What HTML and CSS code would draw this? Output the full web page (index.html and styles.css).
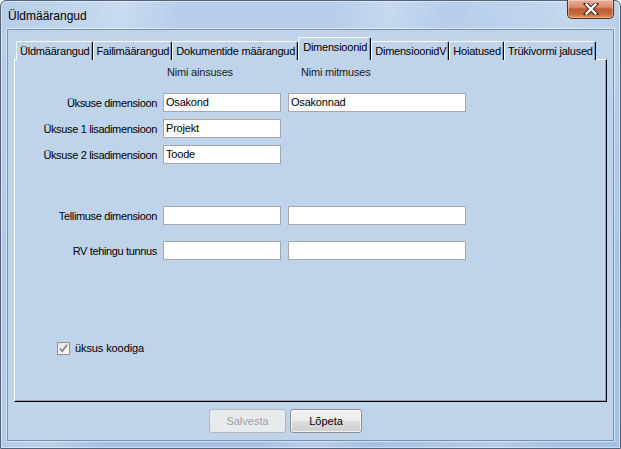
FILE: index.html
```html
<!DOCTYPE html>
<html lang="et">
<head>
<meta charset="utf-8">
<title>Üldmäärangud</title>
<link rel="stylesheet" href="styles.css">
</head>
<body>
<div class="window">
  <div class="titlebar">
    <span class="title">Üldmäärangud</span>
    <div class="close">
      <svg width="16" height="12" viewBox="0 0 16 12">
        <path d="M3 1 L13 11 M13 1 L3 11" stroke="#3a2018" stroke-width="4.2" stroke-linecap="square" fill="none"/>
        <path d="M3.5 1.5 L12.5 10.5 M12.5 1.5 L3.5 10.5" stroke="#ffffff" stroke-width="2.4" stroke-linecap="square" fill="none"/>
      </svg>
    </div>
  </div>
  <div class="client">
    <div class="tabs">
      <div class="tab">Üldmäärangud</div>
      <div class="tab">Failimäärangud</div>
      <div class="tab">Dokumentide määrangud</div>
      <div class="tab active">Dimensioonid</div>
      <div class="tab">DimensioonidV</div>
      <div class="tab">Hoiatused</div>
      <div class="tab">Trükivormi jalused</div>
    </div>
    <div class="panel">
      <div class="heads">
        <span class="head-one">Nimi ainsuses</span>
        <span class="head-two">Nimi mitmuses</span>
      </div>
      <div class="row row-first">
        <span class="lbl">Üksuse dimensioon</span>
        <div class="field f-one">Osakond</div>
        <div class="field f-two">Osakonnad</div>
      </div>
      <div class="row row-next">
        <span class="lbl">Üksuse 1 lisadimensioon</span>
        <div class="field f-one">Projekt</div>
      </div>
      <div class="row row-next">
        <span class="lbl">Üksuse 2 lisadimensioon</span>
        <div class="field f-one">Toode</div>
      </div>
      <div class="row row-order">
        <span class="lbl">Tellimuse dimensioon</span>
        <div class="field f-one"></div>
        <div class="field f-two"></div>
      </div>
      <div class="row row-rv">
        <span class="lbl">RV tehingu tunnus</span>
        <div class="field f-one"></div>
        <div class="field f-two"></div>
      </div>
      <div class="check">
        <span class="box">
          <svg width="11" height="11" viewBox="0 0 11 11">
            <path d="M2 5.5 L4.3 8.3 L9 1.8" stroke="#7d7f82" stroke-width="1.6" fill="none"/>
          </svg>
        </span>
        <span class="check-text">üksus koodiga</span>
      </div>
    </div>
    <div class="buttons">
      <div class="btn btn-disabled">Salvesta</div>
      <div class="btn btn-normal">Lõpeta</div>
    </div>
  </div>
</div>
</body>
</html>
```

FILE: styles.css
```css
* { box-sizing: border-box; }

html, body {
  margin: 0;
  padding: 0;
  background: #ffffff;
}

body {
  font-family: "Liberation Sans", Arial, sans-serif;
  font-size: 11px;
  color: #000;
}

.window {
  width: 621px;
  height: 449px;
  border: 1px solid #52637a;
  border-radius: 6px 6px 0 0;
  background:
    linear-gradient(100deg, rgba(255,255,255,0) 0%, rgba(255,255,255,0.25) 18%, rgba(255,255,255,0) 26%, rgba(255,255,255,0) 48%, rgba(255,255,255,0.22) 56%, rgba(255,255,255,0) 64%, rgba(255,255,255,0.18) 82%, rgba(255,255,255,0) 92%),
    linear-gradient(180deg, #b7cfea 0%, #a9c4e5 60%, #a5c1e3 100%);
  display: flex;
  flex-direction: column;
  box-shadow: inset 0 0 0 1px rgba(255,255,255,0.45);
}

.titlebar {
  height: 28px;
  display: flex;
  justify-content: space-between;
  align-items: flex-start;
  padding: 0 6px 0 7px;
}

.title {
  font-size: 12px;
  line-height: 12px;
  margin-top: 9px;
  color: #000;
}

.close {
  width: 47px;
  height: 19px;
  margin-top: -1px;
  border: 1px solid #5c2a1c;
  border-top: none;
  border-radius: 0 0 5px 5px;
  background: linear-gradient(180deg, #e9b09b 0%, #d88a6c 40%, #c05a35 50%, #c4683c 75%, #dc955f 100%);
  box-shadow: inset 0 0 0 1px rgba(255,220,200,0.5);
  display: flex;
  align-items: center;
  justify-content: center;
}

.client {
  margin: 0 6px 7px 6px;
  flex: 1;
  border: 1px solid #7690b0;
  box-shadow: 0 0 0 1px rgba(255,255,255,0.5);
  background: #bfd3ea;
  padding: 8px 6px 0 6px;
  display: flex;
  flex-direction: column;
}

.tabs {
  height: 22px;
  display: flex;
  align-items: flex-end;
  padding-left: 2px;
  position: relative;
  z-index: 1;
  margin-bottom: -1px;
}

.tab {
  height: 19px;
  padding: 0 2px 0 3px;
  line-height: 18px;
  border-top: 1px solid #ffffff;
  border-left: 1px solid #ffffff;
  border-right: 1px solid #000000;
  border-radius: 2px 2px 0 0;
  box-shadow: inset -1px 0 0 #8fa1b6;
  background: #bfd3ea;
  white-space: nowrap;
  letter-spacing: -0.22px;
}

.tab.active {
  height: 23px;
  line-height: 19px;
  padding: 0 3px 0 4px;
  border-bottom: none;
}

.panel {
  height: 343px;
  border: 1px solid;
  border-color: #ffffff #000000 #000000 #ffffff;
  box-shadow: inset -1px -1px 0 #8fa1b6;
  background: #bfd3ea;
  padding-top: 6px;
  display: flex;
  flex-direction: column;
}

.heads {
  height: 13px;
  line-height: 13px;
  display: flex;
  color: #1a1a1a;
  letter-spacing: -0.2px;
}

.head-one { margin-left: 152px; width: 134px; }
.head-two { margin-left: 0; }

.row {
  display: flex;
  align-items: center;
  height: 19px;
}

.row-first { margin-top: 14px; }
.row-next { margin-top: 7px; }
.row-order { margin-top: 42px; }
.row-rv { margin-top: 16px; }

.lbl {
  width: 142px;
  margin-right: 6px;
  text-align: right;
  white-space: nowrap;
  letter-spacing: -0.35px;
}

.field {
  height: 19px;
  background: #ffffff;
  border: 1px solid #a4a7ab;
  padding-left: 2px;
  line-height: 17px;
  white-space: nowrap;
  letter-spacing: -0.2px;
}

.f-one { width: 118px; }
.f-two { width: 178px; margin-left: 7px; }

.check {
  margin-top: 82px;
  margin-left: 42px;
  display: flex;
  align-items: center;
  height: 13px;
}

.box {
  width: 13px;
  height: 13px;
  border: 1px solid #8f9194;
  background: linear-gradient(135deg, #e6e6e6 0%, #fbfbfb 100%);
  display: flex;
  align-items: center;
  justify-content: center;
  margin-right: 5px;
}

.check-text {
  line-height: 13px;
  letter-spacing: -0.1px;
}

.buttons {
  display: flex;
  gap: 4px;
  margin-top: 7px;
  padding-left: 195px;
}

.btn {
  height: 24px;
  line-height: 22px;
  text-align: center;
  border-radius: 3px;
}

.btn-disabled {
  width: 77px;
  border: 1px solid #b3b7bb;
  background: #e8ebee;
  color: #9c9fa2;
}

.btn-normal {
  width: 72px;
  border: 1px solid #8e9196;
  background: linear-gradient(180deg, #f2f2f2 0%, #ebebeb 48%, #dddddd 52%, #cfcfcf 100%);
  box-shadow: inset 0 0 0 1px rgba(255,255,255,0.7);
  color: #000;
}
```
